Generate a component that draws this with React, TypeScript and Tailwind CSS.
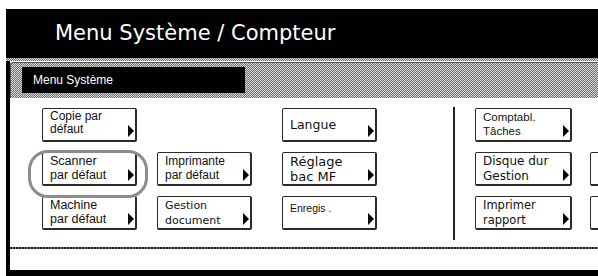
import React from "react";

type Btn = {
  lines: string[];
  big?: boolean;
  size?: string;
  single?: "center" | "top";
};

const SMALL = "font-['Liberation_Sans',Arial,sans-serif]";
const BIG = "font-['DejaVu_Sans',Verdana,sans-serif]";

function Button({ b, w = "w-[95px]" }: { b: Btn; w?: string }) {
  const font = b.big ? BIG : SMALL;
  const size = b.size ?? (b.big ? "text-[12px] leading-[14px]" : "text-[11.5px] leading-[13px]");
  const align =
    b.single === "center"
      ? "flex items-center"
      : b.single === "top"
      ? "pt-[5px]"
      : "pt-[1px]";
  return (
    <div
      className={`relative ${w} h-[34px] shrink-0 bg-white border border-r-2 border-b-2 border-[#2a2a2a] rounded-[2px] pl-[7px] text-[#111] ${font} ${size} ${align}`}
    >
      <div>
        {b.lines.map((l, i) => (
          <div key={i} className="whitespace-nowrap">
            {l}
          </div>
        ))}
      </div>
      <div className="absolute right-[1px] bottom-[3px] w-0 h-0 border-y-[6px] border-y-transparent border-l-[6px] border-l-black" />
    </div>
  );
}

function Empty() {
  return <div className="w-[95px] h-[34px] shrink-0" />;
}

const stipple =
  "bg-[repeating-conic-gradient(#707070_0_25%,#d8d8d8_0_50%)] bg-[length:2px_2px]";

export default function App() {
  return (
    <div className="w-[598px] h-[276px] bg-white overflow-hidden pt-[9px] pl-[6px]">
      <div className="w-[600px] h-[280px] bg-black flex flex-col">
        <div className="h-[49px] flex items-center pl-[49px] text-white text-[21px] font-['DejaVu_Sans',Verdana,sans-serif] whitespace-nowrap">
          Menu Système / Compteur
        </div>
        <div className={`h-[3px] ${stipple}`} />
        <div className="ml-[4px] bg-white flex flex-col">
          <div className="h-[1px] bg-white" />
          <div className={`h-[36px] ${stipple} border-l border-t border-[#555] rounded-tl-[3px] pl-[11px] pt-[4px]`}>
            <div className="w-[223px] h-[26px] bg-black flex items-center pl-[11px] text-white text-[12px] font-['Liberation_Sans',Arial,sans-serif]">
              Menu Système
            </div>
          </div>
          <div className="relative h-[149px] flex items-start pl-[32px] pt-[10px]">
            <div className="flex flex-col gap-[10px] shrink-0">
              <Button b={{ lines: ["Copie par", "défaut"], size: "text-[12px] leading-[13px]" }} />
              <Button b={{ lines: ["Scanner", "par défaut"], size: "text-[12.5px] leading-[14px]" }} />
              <Button b={{ lines: ["Machine", "par défaut"], size: "text-[12.5px] leading-[14px]" }} />
            </div>
            <div className="flex flex-col gap-[10px] ml-[20px] shrink-0">
              <Empty />
              <Button b={{ lines: ["Imprimante", "par défaut"], size: "text-[12px] leading-[14px]" }} />
              <Button b={{ lines: ["Gestion", "document"], big: true, size: "text-[11px] leading-[15px]" }} />
            </div>
            <div className="flex flex-col gap-[10px] ml-[30px] shrink-0">
              <Button b={{ lines: ["Langue"], big: true, size: "text-[12.5px] leading-[14px]", single: "center" }} />
              <Button b={{ lines: ["Réglage", "bac  MF"], big: true, size: "text-[13px] leading-[15px]" }} />
              <Button b={{ lines: ["Enregis ."], size: "text-[10.5px] leading-[13px]", single: "top" }} />
            </div>
            <div className="ml-[76px] mt-[-1px] w-[2px] h-[133px] shrink-0 bg-[#222]" />
            <div className="flex flex-col gap-[10px] ml-[20px] shrink-0">
              <Button w="w-[97px]" b={{ lines: ["Comptabl.", "Tâches"], size: "text-[11.5px] leading-[14px]" }} />
              <Button w="w-[97px]" b={{ lines: ["Disque dur", "Gestion"], big: true, size: "text-[12px] leading-[15px]" }} />
              <Button w="w-[97px]" b={{ lines: ["Imprimer", "rapport"], big: true, size: "text-[11.5px] leading-[15px]" }} />
            </div>
            <div className="flex flex-col gap-[10px] ml-[18px] shrink-0">
              <Empty />
              <Button b={{ lines: [""] }} />
              <Button b={{ lines: [""] }} />
            </div>
            <div className="absolute left-[18px] top-[52px] w-[120px] h-[48px] border-[3px] border-[#8c8c8c] rounded-[20px]" />
          </div>
          <div className="h-[2px] bg-[repeating-linear-gradient(90deg,#222_0_2px,#777_2px_3px)]" />
          <div className="h-[21px] bg-white" />
        </div>
      </div>
    </div>
  );
}
